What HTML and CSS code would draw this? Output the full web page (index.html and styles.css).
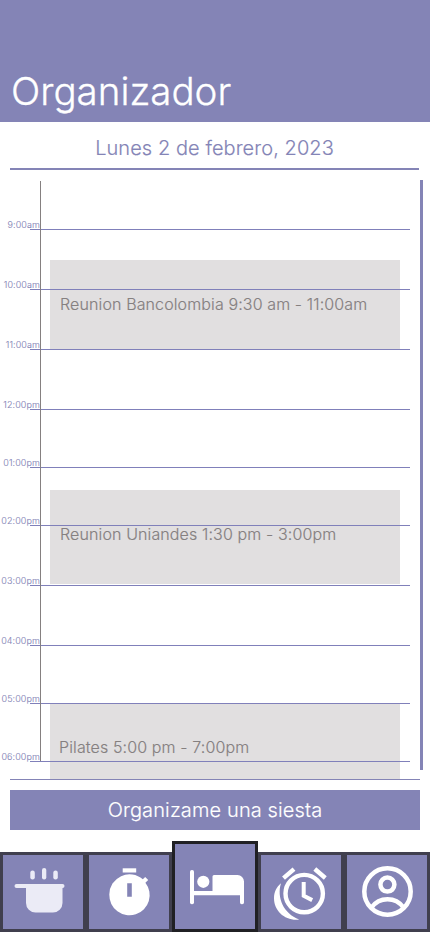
FILE: index.html
```html
<!DOCTYPE html>
<html lang="es">
<head>
<meta charset="utf-8">
<title>Organizador</title>
<link rel="stylesheet" href="styles.css">
</head>
<body>
<header class="header"><h1>Organizador</h1></header>
<h2 class="date">Lunes 2 de febrero, 2023</h2>
<main class="agenda">
  <div class="schedule">
    <div class="event bank"><span>Reunion Bancolombia 9:30 am - 11:00am</span></div>
    <div class="event uni"><span>Reunion Uniandes 1:30 pm - 3:00pm</span></div>
    <div class="event pilates"><span>Pilates 5:00 pm - 7:00pm</span></div>
    <div class="hours">
      <div class="hour first"><span>9:00am</span></div>
      <div class="hour"><span>10:00am</span></div>
      <div class="hour"><span>11:00am</span></div>
      <div class="hour"><span>12:00pm</span></div>
      <div class="hour short"><span>01:00pm</span></div>
      <div class="hour short"><span>02:00pm</span></div>
      <div class="hour"><span>03:00pm</span></div>
      <div class="hour"><span>04:00pm</span></div>
      <div class="hour short"><span>05:00pm</span></div>
      <div class="hour short"><span>06:00pm</span></div>
    </div>
  </div>
  <div class="scrollbar"></div>
</main>
<button class="nap">Organizame una siesta</button>
<nav class="tabs">
  <a class="tab"><svg viewBox="3 855 80 74" fill="#ebebf6"><rect x="14.5" y="884" width="50" height="4" rx="2"/><path d="M26 886h36.500v17a9.500 9.500 0 0 1-9.500 9.500H35.500a9.500 9.500 0 0 1-9.500-9.500z"/><rect x="30.300" y="870.500" width="4.500" height="9" rx="2.200"/><rect x="42" y="868" width="4.300" height="11.500" rx="2.100"/><rect x="53.300" y="870.500" width="4.500" height="9" rx="2.200"/></svg></a>
  <a class="tab"><svg viewBox="89 855 80 74" fill="#fff"><rect x="122.700" y="868.300" width="13.500" height="4.200"/><path fill-rule="evenodd" d="M109.300 894.600a20.200 20.200 0 0 1 33.500-15.300l2.400-2.400 3 3-2.800 2.800a20.200 20.200 0 1 1-36.100 11.900zM127.200 883.300v13.500h4.600v-13.500z"/></svg></a>
  <a class="tab active"><svg viewBox="175 844 80 85" fill="#fff"><rect x="190" y="870" width="4" height="34.300" rx="1.800"/><circle cx="203.300" cy="881.800" r="6.100"/><path d="M192 891h20.500v-14.500a1.500 1.500 0 0 1 1.500-1.500h23.500a6.500 6.500 0 0 1 6.500 6.500v21a1.800 1.800 0 0 1-1.800 1.800h-.5a1.800 1.800 0 0 1-1.700-1.800V895.200H192z"/></svg></a>
  <a class="tab"><svg viewBox="261 855 80 74" fill="none" stroke="#fff"><circle cx="304.200" cy="893.600" r="18.700" stroke-width="4.400"/><path d="M303.700 882v13.800l8.500 4.300" stroke-width="4"/><path d="M283.500 878.200l10.500-9M314.800 869l10.500 9" stroke-width="4.400"/><path fill="#fff" stroke="none" d="M281 883.300c-4.500 14 2.500 30.500 18.200 36.200-13.800 1.700-25.200-8.300-25.200-21.300 0-6 2.500-11.400 7-14.900z"/></svg></a>
  <a class="tab"><svg viewBox="347 855 80 74" fill="none" stroke="#fff" stroke-width="4.500"><circle cx="387.500" cy="891.500" r="23.200"/><circle cx="387.400" cy="884.600" r="7"/><path d="M371.500 907.500c8-11 24-11 32 0"/></svg></a>
</nav>
</body>
</html>
```
FILE: styles.css
```css
* { box-sizing: border-box; }
body {
  margin: 0;
  width: 430px;
  height: 932px;
  overflow: hidden;
  display: flex;
  flex-direction: column;
  background: #fff;
  color: #8484b6;
  font-family: Inter, sans-serif;
  -webkit-text-stroke: 0.15px;
}
.header {
  height: 122px;
  padding: 67px 0 0 11px;
  background: #8484b6;
  color: #fff;
  -webkit-text-stroke: 0.3px;
}
h1 { margin: 0; font-size: 38.5px; font-weight: 300; line-height: 48px; letter-spacing: 0; }
.date {
  margin: 0 11px 0 10px;
  height: 48px;
  padding-top: 14px;
  border-bottom: 2px solid #8484b6;
  font-size: 20px;
  font-weight: 300;
  line-height: 24px;
  letter-spacing: 0.07px;
  text-align: center;
}
.agenda { display: flex; height: 610px; padding-top: 10px; }
.schedule {
  position: relative;
  width: 420px;
  height: 600px;
  padding-top: 1px;
}
.schedule::after {
  content: "";
  position: absolute;
  left: 10px;
  right: 0;
  bottom: 0;
  height: 1px;
  background: #8484b6;
}
.hours { position: relative; }
.hours::before {
  content: "";
  position: absolute;
  z-index: 1;
  left: 40px;
  top: 0;
  width: 1px;
  height: 580px;
  background: #858080;
}
.hour {
  display: flex;
  align-items: flex-end;
  height: 60px;
  background: linear-gradient(#8080ba, #8080ba) 30px 100% / 380px 1px no-repeat;
}
.hour.first { height: 49px; }
.hour.short { height: 58px; }
.hour span {
  width: 40px;
  font-size: 9px;
  font-weight: 300;
  line-height: 11px;
  letter-spacing: 0.1px;
  text-align: right;
  -webkit-text-stroke: 0.1px;
}
.event {
  position: absolute;
  left: 50px;
  width: 350px;
  padding-left: 10px;
  background: #e1dfe0;
  color: #858080;
  font-size: 16px;
  font-weight: 300;
  line-height: 20px;
  letter-spacing: 0.12px;
}
.bank { top: 80px; height: 89px; padding-top: 34px; }
.uni { top: 310px; height: 94px; padding-top: 34px; }
.pilates { top: 523px; height: 76px; padding: 34px 0 0 9px; }
.scrollbar { width: 3px; height: 590px; background: #8484b6; }
.nap {
  width: 410px;
  height: 40px;
  margin: 10px 10px 0;
  padding: 0;
  border: 0;
  background: #8484b6;
  color: #fff;
  font: 300 20px/40px Inter, sans-serif;
  letter-spacing: 0.12px;
}
.tabs { display: flex; align-items: flex-end; height: 91px; margin-top: 11px; }
.tab { width: 86px; height: 80px; border: 3px solid #403f4e; background: #8484b6; }
.tab.active { height: 91px; border-color: #202024; }
.tab svg { display: block; width: 100%; height: 100%; }
```
